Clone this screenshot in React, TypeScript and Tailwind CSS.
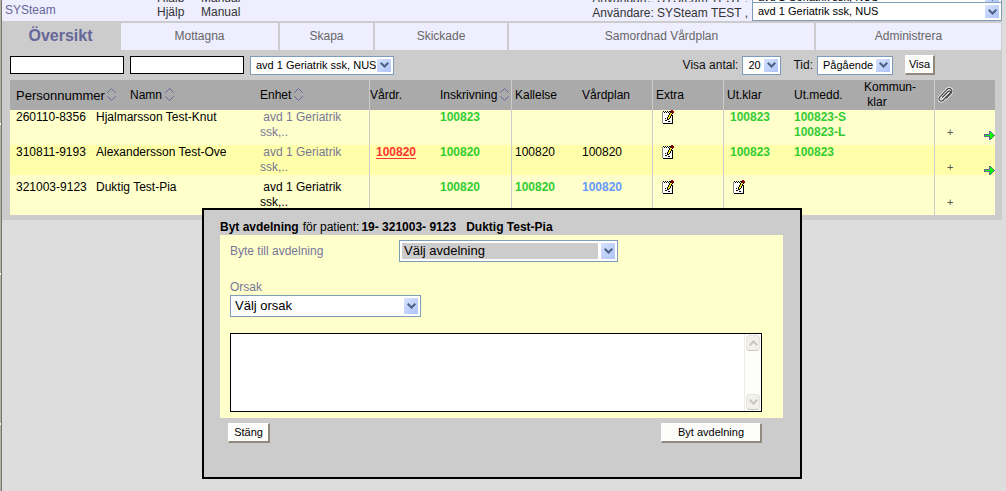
import type { ReactNode } from 'react'
import clsx from 'clsx'

type CellValue = {
  text: string
  tone: 'green' | 'black' | 'blue' | 'red'
}

type PatientRow = {
  personNumber: string
  name: string
  muted: boolean
  vardr?: CellValue
  inskrivning?: CellValue
  kallelse?: CellValue
  vardplan?: CellValue
  utKlar?: CellValue | 'note'
  utMedd: CellValue[]
  hasArrow: boolean
  rowClass: string
}

const tabs = ['Mottagna', 'Skapa', 'Skickade', 'Samordnad Vårdplan', 'Administrera']

const patients: PatientRow[] = [
  {
    personNumber: '260110-8356',
    name: 'Hjalmarsson Test-Knut',
    muted: true,
    inskrivning: { text: '100823', tone: 'green' },
    utKlar: { text: '100823', tone: 'green' },
    utMedd: [
      { text: '100823-S', tone: 'green' },
      { text: '100823-L', tone: 'green' }
    ],
    hasArrow: true,
    rowClass: 'bg-[#ffffcc] *:pb-[5px]'
  },
  {
    personNumber: '310811-9193',
    name: 'Alexandersson Test-Ove',
    muted: true,
    vardr: { text: '100820', tone: 'red' },
    inskrivning: { text: '100820', tone: 'green' },
    kallelse: { text: '100820', tone: 'black' },
    vardplan: { text: '100820', tone: 'black' },
    utKlar: { text: '100823', tone: 'green' },
    utMedd: [{ text: '100823', tone: 'green' }],
    hasArrow: true,
    rowClass: 'bg-[#ffffaa]'
  },
  {
    personNumber: '321003-9123',
    name: 'Duktig Test-Pia',
    muted: false,
    inskrivning: { text: '100820', tone: 'green' },
    kallelse: { text: '100820', tone: 'green' },
    vardplan: { text: '100820', tone: 'blue' },
    utKlar: 'note',
    utMedd: [],
    hasArrow: false,
    rowClass: 'bg-[#ffffcc] *:py-[5px]'
  }
]

const toneClass = {
  green: 'font-bold text-[#33cc33]',
  black: 'text-black',
  blue: 'font-bold text-[#6699ff]',
  red: 'font-bold text-[#ff3333] underline underline-offset-2'
}

function SortIcon() {
  return (
    <svg width="9" height="13" viewBox="0 0 9 13" fill="none" stroke="#666699" aria-hidden="true">
      <path d="M0.3 4.7 4.5 0.5 8.7 4.7M0.3 8.3 4.5 12.5 8.7 8.3" />
    </svg>
  )
}

function NoteIcon() {
  return (
    <svg width="12" height="14" viewBox="0 0 12 14" shapeRendering="crispEdges" aria-hidden="true">
      <path d="M1 2h10v11H1z" fill="#fff" />
      <path d="M0 2h1v11H0z" fill="#888" />
      <path d="M1 13h10v1H1zM10 5h1v8h-1zM1 1h1v1H1zM3 1h1v1H3zM5 1h1v1H5zM7 1h1v1H7zM2 2h1v1H2zM4 2h1v1H4zM6 2h1v1H6z" fill="#000" />
      <path d="M8 1h1v2H8zM7 3h1v2H7zM6 5h1v2H6zM5 7h1v3H5zM6 9h1v1H6zM7 8h1v1H7zM8 6h1v2H8zM9 4h1v2H9zM10 3h1v1h-1zM3 10h2v1H3zM3 8h1v1H3zM6 11h2v1H6z" fill="#000" />
      <path d="M8 3h1v1H8zM8 4h1v2H8zM7 5h1v3H7zM6 7h1v2H6zM9 3h1v1H9z" fill="#ffee22" />
      <path d="M9 0h2v1H9zM9 1h3v2H9z" fill="#880000" />
    </svg>
  )
}

function ArrowIcon() {
  return (
    <svg width="11" height="9" viewBox="0 0 11 9" shapeRendering="crispEdges" aria-hidden="true">
      <path d="M0 3h5V0h2v1h1v1h1v1h1v1h1v1h-1v1H9v1H8v1H7v1H5V6H0z" fill="#666699" />
      <path d="M1 4h5V1h1v1h1v1h1v1h1v1H9v1H8v1H7v1H6V5H1z" fill="#00ff00" />
    </svg>
  )
}

function ClipIcon() {
  const clip = 'M4.5 10 9.6 4.9c1.4-1.4 3 .1 1.7 1.5l-6.2 6.3c-2 2-5-.6-3-2.8L8.6 3c2.3-2.3 6 .6 3.7 3.2L8 10.8'
  return (
    <svg width="15" height="16" viewBox="0.5 1 13.5 14" fill="none" strokeLinecap="round" aria-label="Bilagor" role="img">
      <path d={clip} stroke="#f4f4f4" strokeWidth="2.6" />
      <path d={clip} stroke="#444" strokeWidth="1.1" />
    </svg>
  )
}

function Chevron({ className }: { className: string }) {
  return (
    <svg width="9" height="6" viewBox="0 0 9 6" fill="none" strokeWidth="2" className={className} aria-hidden="true">
      <path d="M0.7 0.7 4.5 4.5 8.3 0.7" />
    </svg>
  )
}

type SelectProps = {
  label: string
  id?: string
  value: string
  className: string
  selectClass?: string
}

function Select({ label, id, value, className, selectClass = 'pl-[3px] text-[11px] leading-[13px]' }: SelectProps) {
  return (
    <div className={clsx('relative border border-[#7f9db9] bg-white p-0.5', className)}>
      <select
        id={id}
        aria-label={label}
        className={clsx('block h-full w-full appearance-none text-black outline-none', selectClass)}
      >
        <option>{value}</option>
      </select>
      <span className="pointer-events-none absolute inset-y-px right-px flex w-4 items-center justify-center border border-white bg-linear-to-br from-[#d6e2ff] to-[#adc4f7]">
        <Chevron className="stroke-[#4d6185]" />
      </span>
    </div>
  )
}

function ClassicButton({ children, className }: { children: ReactNode; className: string }) {
  return (
    <button
      type="button"
      className={clsx(
        'h-5 border-t border-l border-r-2 border-b-2 border-t-white border-l-white border-r-[#8f8a7c] border-b-[#8f8a7c] bg-[#fcfcfb] text-[11px] leading-none text-black',
        className
      )}
    >
      {children}
    </button>
  )
}

function AccountRow() {
  return (
    <div className="flex h-[19px] pl-[3px] text-[#333333]">
      <a href="#" className="w-[152px] leading-4 text-[#666699]">SYSteam</a>
      <a href="#" className="w-11 leading-5">Hjälp</a>
      <a href="#" className="leading-5">Manual</a>
      <p className="mr-1 ml-auto leading-[22px] whitespace-pre">Användare: SYSteam TEST ,</p>
      <Select label="Vald avdelning" value="avd 1 Geriatrik ssk, NUS" className="w-[250px]" />
    </div>
  )
}

function Tabs() {
  return (
    <nav className="grid grid-cols-[117fr_157fr_93fr_132fr_305fr_185fr] gap-0.5 pt-0.5 pr-px text-center leading-[27px] text-[#666666]">
      <a href="#" aria-current="page" className="text-base leading-[26px] font-bold text-[#666699]">Översikt</a>
      {tabs.map((tab) => (
        <a key={tab} href="#" className="bg-[#eeeeff]">{tab}</a>
      ))}
    </nav>
  )
}

function FilterBar() {
  return (
    <form className="flex h-[30px] items-center gap-1.5 pr-[67px] pl-2">
      <input aria-label="Personnummer" className="h-[18px] w-[114px] border border-black bg-white px-1 outline-none" />
      <input aria-label="Namn" className="h-[18px] w-[114px] border border-black bg-white px-1 outline-none" />
      <Select label="Enhet" value="avd 1 Geriatrik ssk, NUS" className="h-[19px] w-36" />
      <div className="ml-auto flex items-center gap-3">
        <label className="flex items-center gap-1">
          Visa antal:
          <Select label="Visa antal" value="20" className="h-[19px] w-[39px]" />
        </label>
        <label className="flex items-center gap-1">
          Tid:
          <Select label="Tid" value="Pågående" className="h-[19px] w-[76px]" />
        </label>
        <ClassicButton className="w-[30px]">Visa</ClassicButton>
      </div>
    </form>
  )
}

function Value({ value }: { value?: CellValue }) {
  if (!value) return null
  if (value.tone === 'red') return <a href="#" className={toneClass.red}>{value.text}</a>
  return <span className={clsx('block', toneClass[value.tone])}>{value.text}</span>
}

function PatientTable() {
  const line = 'border-r border-[#cccccc]'
  return (
    <table className="w-full table-fixed border-separate border-spacing-0 text-left leading-[15px] text-black">
      <colgroup>
        <col className="w-[86px]" />
        <col />
        <col className="w-[110px]" />
        <col className="w-[70px]" />
        <col className="w-[72px]" />
        <col className="w-[70px]" />
        <col className="w-[71px]" />
        <col className="w-[71px]" />
        <col className="w-[70px]" />
        <col className="w-[70px]" />
        <col className="w-[71px]" />
        <col className="w-[60px]" />
      </colgroup>
      <thead>
        <tr className="bg-[#aaaaaa] *:font-normal">
          <th colSpan={2}>
            <div className="flex pl-1.5">
              <span className="flex w-[114px] gap-0.5 text-[13px]">Personnummer<SortIcon /></span>
              <span className="flex gap-[3px]">Namn<SortIcon /></span>
            </div>
          </th>
          <th className={line}><span className="flex gap-[3px]">Enhet<SortIcon /></span></th>
          <th>Vårdr.</th>
          <th className={line}><span className="flex gap-[3px]">Inskrivning<SortIcon /></span></th>
          <th className="pl-[3px]">Kallelse</th>
          <th className={line}>Vårdplan</th>
          <th className={clsx(line, 'pl-[3px]')}>Extra</th>
          <th className="pl-[3px]">Ut.klar</th>
          <th>Ut.medd.</th>
          <th className={line}>Kommun-<br />&nbsp;klar</th>
          <th className="pl-[3px]"><ClipIcon /></th>
        </tr>
      </thead>
      <tbody>
        {patients.map((patient) => (
          <tr key={patient.personNumber} className={clsx('*:align-top', patient.rowClass)}>
            <td className="pl-1.5">{patient.personNumber}</td>
            <td>{patient.name}</td>
            <td className={clsx(line, patient.muted && 'text-[#777799]')}>
              &nbsp;avd 1 Geriatrik<br />ssk,..
            </td>
            <td className="pl-1.5"><Value value={patient.vardr} /></td>
            <td className={line}><Value value={patient.inskrivning} /></td>
            <td className="pl-[3px]"><Value value={patient.kallelse} /></td>
            <td className={line}><Value value={patient.vardplan} /></td>
            <td className={clsx(line, 'pl-[9px]')}>
              <button type="button" aria-label="Anteckning" className="block"><NoteIcon /></button>
            </td>
            <td className="pl-1.5">
              {patient.utKlar === 'note' ? (
                <button type="button" aria-label="Anteckning" className="ml-[3px] block"><NoteIcon /></button>
              ) : (
                <Value value={patient.utKlar} />
              )}
            </td>
            <td>{patient.utMedd.map((value) => <Value key={value.text} value={value} />)}</td>
            <td className={line} />
            <td>
              <div className="flex h-[30px] items-end justify-between pl-3">
                <button type="button" className="text-[11px] text-[#555555]">+</button>
                {patient.hasArrow && <a href="#" aria-label="Öppna"><ArrowIcon /></a>}
              </div>
            </td>
          </tr>
        ))}
      </tbody>
    </table>
  )
}

function ScrollButton({ up = false }: { up?: boolean }) {
  return (
    <span className="flex h-4 items-center justify-center rounded-sm border border-[#e4e4dc] border-b-[#c9c7ba] bg-[#f1f0ea]">
      <Chevron className={clsx('stroke-[#c9c7ba]', up && 'rotate-180')} />
    </span>
  )
}

function ChangeWardDialog() {
  return (
    <section
      role="dialog"
      aria-labelledby="dialog-title"
      className="absolute inset-x-0 top-52 mx-auto w-[600px] border-2 border-black bg-[#cccccc] px-4 pt-2.5 pb-[34px] text-black"
    >
      <h2 id="dialog-title" className="flex leading-[15px]">
        <b className="mr-1">Byt avdelning</b>
        <span className="mr-0.5">för patient:</span>
        <b className="mr-2.5">19- 321003- 9123</b>
        <b>Duktig Test-Pia</b>
      </h2>
      <div className="w-[563px] bg-[#ffffcc] pt-[5px] pr-[21px] pb-1.5 pl-2.5 text-[#777799]">
        <div className="flex h-[22px] items-center">
          <label htmlFor="ward" className="w-[169px]">Byte till avdelning</label>
          <Select
            id="ward"
            label="Byte till avdelning"
            value="Välj avdelning"
            className="h-[22px] w-[219px] pr-[19px]"
            selectClass="bg-[#cccccc] pl-0.5 text-[13px] leading-4"
          />
        </div>
        <label htmlFor="reason" className="mt-[18px] block leading-[15px]">Orsak</label>
        <Select
          id="reason"
          label="Orsak"
          value="Välj orsak"
          className="h-[22px] w-[191px]"
          selectClass="pl-0.5 text-[13px] leading-4"
        />
        <div className="mt-4 flex h-[79px] border border-black bg-white">
          <textarea aria-label="Kommentar" className="flex-1 resize-none p-1 text-black outline-none" />
          <div className="flex w-[17px] flex-col justify-between border-l border-[#eeede5] bg-[#fdfdfa] p-px" aria-hidden="true">
            <ScrollButton up />
            <ScrollButton />
          </div>
        </div>
      </div>
      <div className="mt-[5px] flex w-[542px] justify-between pl-2">
        <ClassicButton className="w-[42px]">Stäng</ClassicButton>
        <ClassicButton className="w-[101px]">Byt avdelning</ClassicButton>
      </div>
    </section>
  )
}

function App() {
  return (
    <div className="flex min-h-screen bg-[#dddddd] pr-1 font-['Liberation_Sans',Arial,sans-serif] text-[12px] text-[#111111]">
      <div className="w-0.5 shrink-0 border-r border-[#77756a] bg-[#b5b3a6] bg-[linear-gradient(white_0_2px,transparent_2px)] bg-[length:2px_150px] bg-[position:0_123px]" />
      <main className="relative min-w-0 flex-1">
        <header className="bg-[#eeeeff]">
          {/* sliver of the row that has scrolled out above */}
          <div className="flex h-0.5 flex-col justify-end overflow-hidden" aria-hidden="true">
            <div className="-mb-[5px] shrink-0"><AccountRow /></div>
          </div>
          <AccountRow />
        </header>
        <div className="bg-[#cccccc] pb-[5px]">
          <Tabs />
          <FilterBar />
          <div className="pr-[7px] pl-2">
            <PatientTable />
          </div>
        </div>
        <ChangeWardDialog />
      </main>
    </div>
  )
}

export default App
